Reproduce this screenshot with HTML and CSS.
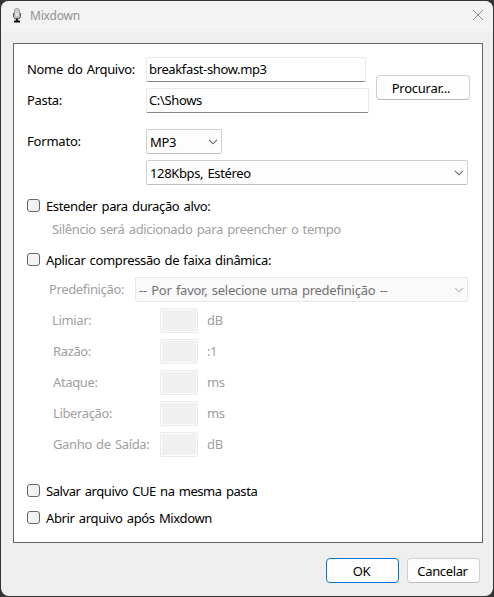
FILE: index.html
```
<!DOCTYPE html>
<html lang="pt-BR">
<head>
  <meta charset="UTF-8" />
  <meta name="viewport" content="width=device-width, initial-scale=1" />
  <title>Mixdown</title>
  <link rel="stylesheet" href="styles.css">
</head>
<body>
  <div class="window">
    <header class="titlebar">
      <svg class="mic" width="10" height="15" viewBox="0 0 10 15">
        <rect x="2.5" y="0.5" width="5" height="9" rx="2.5" fill="#e4e4e4" stroke="#999"/>
        <path d="M3 2.5h4M3 4.5h4" stroke="#bbb"/>
        <path d="M1.5 5v2.5a3.5 3.5 0 0 0 7 0V5" fill="none" stroke="#666" stroke-width="1.2"/>
        <path d="M5 10.5v3M2 13.5h6" stroke="#111" stroke-width="1.8"/>
      </svg>
      <span class="title">Mixdown</span>
      <svg class="close" width="12" height="12" viewBox="0 0 12 12">
        <path d="M1 1l10 10M11 1L1 11" stroke="#8c8c8c" fill="none"/>
      </svg>
    </header>

    <form class="panel" onsubmit="event.preventDefault();">
      <div class="file">
        <div class="file-fields">
          <div class="row"><label for="name">Nome do Arquivo:</label><input type="text" id="name" class="name" value="breakfast-show.mp3"></div>
          <div class="row"><label for="folder">Pasta:</label><input type="text" id="folder" class="folder" value="C:\Shows"></div>
        </div>
        <button type="button" class="browse">Procurar...</button>
      </div>

      <div class="format">
        <span class="format-label">Formato:</span>
        <div class="combo combo-short"><span>MP3</span><svg width="10" height="6" viewBox="0 0 10 6"><path d="M1 .8l4 4 4-4"/></svg></div>
        <div class="combo combo-wide"><span>128Kbps, Estéreo</span><svg width="10" height="6" viewBox="0 0 10 6"><path d="M1 .8l4 4 4-4"/></svg></div>
      </div>

      <label class="check extend"><input type="checkbox"><span>Estender para duração alvo:</span></label>
      <p class="hint">Silêncio será adicionado para preencher o tempo</p>

      <label class="check compress"><input type="checkbox"><span>Aplicar compressão de faixa dinâmica:</span></label>
      <div class="preset">
        <span>Predefinição:</span>
        <div class="combo combo-off"><span>-- Por favor, selecione uma predefinição --</span><svg width="10" height="6" viewBox="0 0 10 6"><path d="M1 .8l4 4 4-4"/></svg></div>
      </div>
      <div class="params">
        <div class="param limiar"><span>Limiar:</span><input type="text" disabled><span>dB</span></div>
        <div class="param"><span>Razão:</span><input type="text" disabled><span>:1</span></div>
        <div class="param"><span>Ataque:</span><input type="text" disabled><span>ms</span></div>
        <div class="param"><span>Liberação:</span><input type="text" disabled><span>ms</span></div>
        <div class="param"><span>Ganho de Saída:</span><input type="text" disabled><span>dB</span></div>
      </div>

      <label class="check cue"><input type="checkbox"><span>Salvar arquivo CUE na mesma pasta</span></label>
      <label class="check open"><input type="checkbox"><span>Abrir arquivo após Mixdown</span></label>
    </form>

    <footer class="actions">
      <button type="button" class="ok">OK</button>
      <button type="button">Cancelar</button>
    </footer>
  </div>
</body>
</html>
```

FILE: styles.css
```
* { box-sizing: border-box; }
body { margin: 0; padding: 1px; width: 494px; height: 597px; overflow: hidden; background: #353336; color: #000; font: 13px/18px "Noto Sans", sans-serif; letter-spacing: -0.36px; word-spacing: 1.2px; }
input, button { font: inherit; color: inherit; letter-spacing: inherit; word-spacing: inherit; margin: 0; }

.window { width: 492px; height: 595px; background: #efefef; border-radius: 8px; overflow: hidden; }
.titlebar { display: flex; align-items: center; height: 30px; padding: 0 9px 2px 11px; background: #f3f3f3; }
.title { margin-left: 8px; padding-top: 2px; font-size: 12px; letter-spacing: -0.2px; color: #929292; }
.close { margin-left: auto; }

.panel { width: 470px; height: 500px; margin: 12px 0 0 12px; padding: 13px 12px 0 13px; background: #fff; border: 1px solid #646464; }

.file { display: flex; align-items: center; }
.file-fields { width: 349px; flex: none; }
.row { display: flex; align-items: center; height: 25px; }
.row + .row { margin-top: 6px; }
.row label { width: 119px; padding-bottom: 2px; letter-spacing: -0.32px; }
.row input { height: 25px; padding: 0 2px 1px; background: #fff; border: 1px solid #e9e9e9; border-bottom-color: #868686; border-radius: 2px; outline: none; }
.name { width: 220px; }
.folder { width: 223px; }

button { height: 25px; padding: 0 2px 0 0; background: #fdfdfd; border: 1px solid #d0d0d0; border-bottom-color: #bcbcbc; border-radius: 4px; }
.browse { flex: none; width: 94px; margin-top: 5px; padding-right: 4px; letter-spacing: -0.25px; }

.format { display: grid; grid-template-columns: 119px 322px; row-gap: 6px; align-items: center; margin-top: 16px; }
.format-label { padding-bottom: 2px; letter-spacing: -0.2px; }
.combo { display: flex; align-items: center; justify-content: space-between; height: 25px; padding: 0 3px; background: #fdfdfd; border: 1px solid #d0d0d0; border-bottom-color: #bcbcbc; border-radius: 2px; }
.combo path { fill: none; stroke: #666; stroke-width: 1.1; }
.combo-short { width: 76px; }
.combo-wide { grid-column: 2; }
.combo-off { width: 333px; background: #fafafa; border-color: #e8e8e8; color: #717171; letter-spacing: -0.25px; }
.combo-off path { stroke: #bbb; }

.check { display: flex; align-items: center; height: 13px; }
.check input { appearance: none; width: 13px; height: 13px; background: #f3f3f3; border: 1px solid #666; border-radius: 3px; }
.check span { margin-left: 6px; }
.extend { margin-top: 14px; }
.hint { margin: 8px 0 15px 25px; color: #a0a0a0; }

.preset { display: flex; align-items: center; margin-top: 11px; padding-left: 22px; color: #a0a0a0; }
.preset > span { width: 86px; padding-bottom: 2px; }
.params { margin-top: 6px; padding-left: 26px; color: #a0a0a0; }
.param { display: flex; align-items: center; margin-bottom: 6px; }
.param span { padding-bottom: 2px; }
.param span:first-child { width: 107px; white-space: nowrap; }
.limiar span:first-child { margin-left: -1px; width: 108px; }
.param input { width: 38px; height: 25px; margin-right: 9px; background: #f0f0f0; border: 1px solid #ebebeb; border-radius: 2px; box-shadow: inset 0 0 0 1px #fcfcfc; }

.cue { margin-top: 27px; letter-spacing: -0.42px; }
.open { margin-top: 14px; }

.actions { display: flex; justify-content: flex-end; gap: 8px; margin: 15px 13px 0 0; }
.actions button { width: 73px; }
.actions .ok { border-color: #0078d4; }
```
